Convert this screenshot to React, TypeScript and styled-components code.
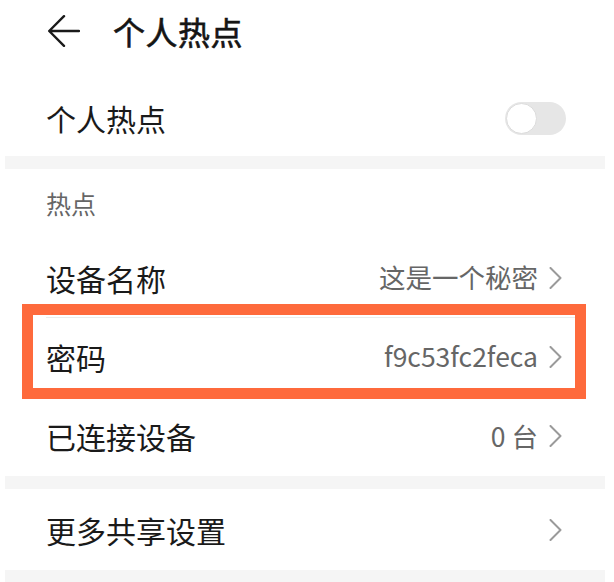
import React from "react";
import styled, { createGlobalStyle } from "styled-components";

const GlobalStyle = createGlobalStyle`
  html, body {
    margin: 0;
    padding: 0;
    background: #ffffff;
  }
  body {
    font-family: "Noto Sans CJK SC", "Noto Sans", sans-serif;
    color: #1a1a1a;
    -webkit-font-smoothing: antialiased;
  }
`;

const Page = styled.div`
  width: 600px;
  margin-left: 5px;
  background: #ffffff;
  display: flex;
  flex-direction: column;
`;

const Header = styled.div`
  height: 62px;
  display: flex;
  align-items: center;
  padding-left: 43px;
  gap: 33px;
`;

const Title = styled.div`
  font-size: 32px;
  font-weight: 400;
  -webkit-text-stroke: 0.6px #151515;
  letter-spacing: 0.5px;
  color: #151515;
  line-height: 1;
`;

const ToggleRow = styled.div`
  height: 94px;
  box-sizing: border-box;
  padding: 18px 39px 0 41px;
  display: flex;
  align-items: center;
  justify-content: space-between;
`;

const Label = styled.div`
  font-size: 30px;
  line-height: 1;
  color: #1a1a1a;
`;

const Switch = styled.div`
  width: 61px;
  height: 33px;
  border-radius: 17px;
  background: #e6e6e6;
  box-sizing: border-box;
  padding: 1px;
  display: flex;
  align-items: center;
`;

const Knob = styled.div`
  width: 31px;
  height: 31px;
  border-radius: 50%;
  background: #ffffff;
  box-sizing: border-box;
  border: 1.5px solid #dcdcdc;
`;

const Band = styled.div<{ $h: number }>`
  height: ${(p) => p.$h}px;
  background: #f5f5f5;
`;

const SectionHeader = styled.div`
  height: 69px;
  display: flex;
  align-items: center;
  padding-left: 41px;
  font-size: 25px;
  color: #666666;
  line-height: 1;
`;

const Row = styled.div<{ $h: number; $divider?: boolean }>`
  position: relative;
  height: ${(p) => p.$h}px;
  box-sizing: border-box;
  padding: 0 43px 0 41px;
  display: flex;
  align-items: center;
  justify-content: space-between;
  ${(p) =>
    p.$divider
      ? `&::before {
          content: "";
          position: absolute;
          top: 0;
          left: 41px;
          right: 28px;
          height: 1px;
          background: #ececec;
        }`
      : ""}
`;

const Right = styled.div`
  display: flex;
  align-items: center;
  gap: 11px;
`;

const Value = styled.div`
  font-size: 26.5px;
  line-height: 1;
  color: #666666;
`;

const Highlight = styled.div`
  position: absolute;
  top: -13px;
  bottom: -3px;
  left: 17px;
  right: 19px;
  border: 11px solid #fe6a3c;
  pointer-events: none;
`;

const BackArrow = () => (
  <svg width="32" height="32" viewBox="0 0 32 32" fill="none">
    <path
      d="M31 16H1.8M16 1.2L1.2 16L16 30.8"
      stroke="#1a1a1a"
      strokeWidth="2.4"
      strokeLinecap="round"
      strokeLinejoin="round"
    />
  </svg>
);

const Chevron = () => (
  <svg width="13" height="22" viewBox="0 0 13 22" fill="none">
    <path
      d="M1.5 1L11.5 11L1.5 21"
      stroke="#9a9a9a"
      strokeWidth="2"
      strokeLinecap="round"
      strokeLinejoin="round"
    />
  </svg>
);

export default function App() {
  return (
    <>
      <GlobalStyle />
      <Page>
        <Header>
          <BackArrow />
          <Title>个人热点</Title>
        </Header>
        <ToggleRow>
          <Label>个人热点</Label>
          <Switch>
            <Knob />
          </Switch>
        </ToggleRow>
        <Band $h={13} />
        <SectionHeader>热点</SectionHeader>
        <Row $h={79}>
          <Label>设备名称</Label>
          <Right>
            <Value>这是一个秘密</Value>
            <Chevron />
          </Right>
        </Row>
        <Row $h={79} $divider>
          <Label>密码</Label>
          <Right>
            <Value>f9c53fc2feca</Value>
            <Chevron />
          </Right>
          <Highlight />
        </Row>
        <Row $h={80}>
          <Label>已连接设备</Label>
          <Right>
            <Value>0 台</Value>
            <Chevron />
          </Right>
        </Row>
        <Band $h={13} />
        <Row $h={81}>
          <Label>更多共享设置</Label>
          <Right>
            <Chevron />
          </Right>
        </Row>
        <Band $h={14} />
      </Page>
    </>
  );
}
